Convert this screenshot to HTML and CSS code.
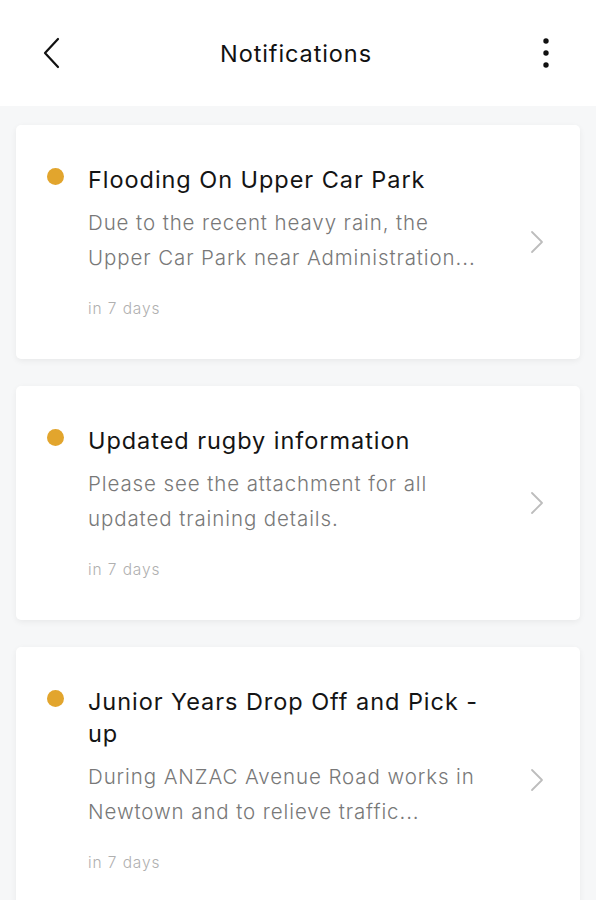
FILE: index.html
```html
<!DOCTYPE html>
<html>
<head>
    <title>Notifications</title>
    <link rel="stylesheet" href="styles.css">
</head>
<body>
    <div class="top-bar">
        <button class="icon-btn back-btn" aria-label="Back">
            <svg width="18" height="32" viewBox="0 0 18 32"><path d="M16 2 L3 16 L16 30" fill="none" stroke="#111" stroke-width="2.2" stroke-linecap="round" stroke-linejoin="round"/></svg>
        </button>
        <h1 class="page-title">Notifications</h1>
        <button class="icon-btn more-btn" aria-label="More">
            <svg width="8" height="30" viewBox="0 0 8 30"><circle cx="4" cy="3" r="2.7" fill="#111"/><circle cx="4" cy="15" r="2.7" fill="#111"/><circle cx="4" cy="27" r="2.7" fill="#111"/></svg>
        </button>
    </div>

    <div class="list">
        <!-- one card per notification -->
        <div class="card">
            <span class="dot"></span>
            <div class="card-body">
                <h3 class="card-title">Flooding On Upper Car Park</h3>
                <p class="card-text">Due to the recent heavy rain, the<br>Upper Car Park near Administration...</p>
                <span class="card-time">in 7 days</span>
            </div>
            <svg class="chevron" width="14" height="24" viewBox="0 0 14 24"><path d="M2 2 L12 12 L2 22" fill="none" stroke="#bdbdbd" stroke-width="1.8" stroke-linecap="round" stroke-linejoin="round"/></svg>
        </div>

        <div class="card">
            <span class="dot"></span>
            <div class="card-body">
                <h3 class="card-title">Updated rugby information</h3>
                <p class="card-text">Please see the attachment for all<br>updated training details.</p>
                <span class="card-time">in 7 days</span>
            </div>
            <svg class="chevron" width="14" height="24" viewBox="0 0 14 24"><path d="M2 2 L12 12 L2 22" fill="none" stroke="#bdbdbd" stroke-width="1.8" stroke-linecap="round" stroke-linejoin="round"/></svg>
        </div>

        <div class="card">
            <span class="dot"></span>
            <div class="card-body">
                <h3 class="card-title">Junior Years Drop Off and Pick - up</h3>
                <p class="card-text">During ANZAC Avenue Road works in<br>Newtown and to relieve traffic...</p>
                <span class="card-time">in 7 days</span>
            </div>
            <svg class="chevron" width="14" height="24" viewBox="0 0 14 24"><path d="M2 2 L12 12 L2 22" fill="none" stroke="#bdbdbd" stroke-width="1.8" stroke-linecap="round" stroke-linejoin="round"/></svg>
        </div>
    </div>
</body>
</html>
```

FILE: styles.css
```css
body {
    margin: 0;
    padding: 0;
    font-family: Inter, "Noto Sans", Arial, sans-serif;
    background: #f6f7f8;
    color: #111;
}

.top-bar {
    height: 106px;
    background: #fff;
    display: grid;
    grid-template-columns: 1fr auto 1fr;
    align-items: center;
    padding: 0 46px 0 36px;
    box-sizing: border-box;
}

.icon-btn {
    background: none;
    border: none;
    padding: 0;
    display: flex;
    align-items: center;
    cursor: pointer;
}

.back-btn {
    justify-self: start;
    width: 30px;
    margin-bottom: 1px;
    justify-content: center;
}

.more-btn {
    justify-self: end;
    width: 30px;
    justify-content: flex-end;
}

.page-title {
    margin: 0;
    font-size: 23.5px;
    font-weight: 400;
    letter-spacing: 0.9px;
    padding-left: 6px;
}

.list {
    padding: 19px 16px;
    display: flex;
    flex-direction: column;
    gap: 27px;
}

.card {
    background: #fff;
    border-radius: 5px;
    box-shadow: 0 2px 6px rgba(0, 0, 0, 0.06);
    display: flex;
    align-items: flex-start;
    padding: 39px 36px 40px 31px;
}

.dot {
    width: 17px;
    height: 17px;
    border-radius: 50%;
    background: #e2a52d;
    flex-shrink: 0;
    margin-top: 4px;
    margin-right: 24px;
}

.card-body {
    flex: 1;
    max-width: 408px;
}

.card-title {
    margin: 0;
    font-size: 23.5px;
    font-weight: 400;
    letter-spacing: 0.95px;
    line-height: 32px;
    color: #141414;
}

.card-text {
    margin: 9px 0 0;
    font-size: 20.5px;
    font-weight: 300;
    letter-spacing: 0.9px;
    line-height: 35px;
    color: #787878;
}

.card-time {
    display: block;
    margin-top: 24px;
    font-size: 15.5px;
    font-weight: 300;
    letter-spacing: 0.9px;
    line-height: 20px;
    color: #b0b0b0;
}

.chevron {
    align-self: center;
    margin-left: auto;
    flex-shrink: 0;
}
```
